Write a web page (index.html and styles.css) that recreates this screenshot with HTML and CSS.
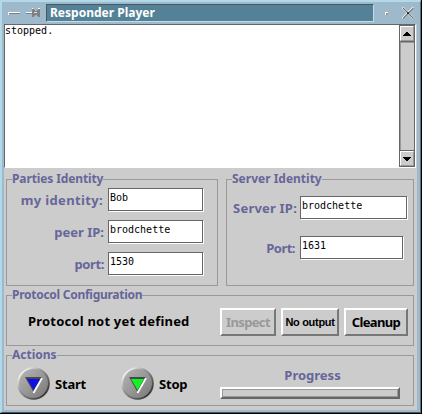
FILE: index.html
```html
<!DOCTYPE html>
<html lang="en">
<head>
<meta charset="utf-8">
<title>Responder Player</title>
<link rel="stylesheet" href="styles.css">
</head>
<body>
<div class="window">
  <header class="titlebar">
    <svg class="minimize" width="12" height="3" shape-rendering="crispEdges"><path d="M0 0h12v1H1v2H0z" fill="#fff"/><path d="M1 1h11v1H1z" fill="#808080"/></svg>
    <svg class="pin" width="15" height="10" shape-rendering="crispEdges"><path d="M0 4h6v1H0zM6 0h1v3H6zM12 0h2v1h-2z" fill="#fff"/><path d="M0 5h6V1h2v1h1v1h2V2h1V1h2v8h-2V8h-1V7H9v1H8v1H6V6H0z" fill="#808080"/><path d="M8 4h3v1H8z" fill="#e0e0e0"/></svg>
    <h1 class="title"><span>Responder Player</span></h1>
    <svg class="dot" width="3" height="3" shape-rendering="crispEdges"><path d="M0 0h3v1H1v2H0z" fill="#fff"/><path d="M1 1h2v2H1z" fill="#a09088"/></svg>
    <svg class="close" width="12" height="12"><path d="M.5.5l11 11M11.5.5l-11 11" stroke="#fff" stroke-width="2.2"/><path d="M1 1l10.5 10.5M11.5 1L1 11.5" stroke="#707070" stroke-width="1.2"/><path d="M5 5h2v2H5z" fill="#303030"/></svg>
  </header>
  <main class="content">
    <div class="log">
      <div class="log-text">stopped.</div>
      <div class="scrollbar">
        <div class="arrow"><svg width="8" height="4" shape-rendering="crispEdges"><path d="M3 0h2v1h1v1h1v1h1v1H0V3h1V2h1V1h1z"/></svg></div>
        <div class="track"></div>
        <div class="arrow"><svg width="8" height="4" shape-rendering="crispEdges"><path d="M0 0h8v1H7v1H6v1H5v1H3V3H2V2H1V1H0z"/></svg></div>
      </div>
    </div>
    <div class="identities">
      <section class="group parties">
        <h2 class="legend"><span class="l-parties">Parties Identity</span></h2>
        <div class="row"><label class="my">my identity:</label><div class="field">Bob</div></div>
        <div class="row"><label class="peer">peer IP:</label><div class="field">brodchette</div></div>
        <div class="row"><label class="port">port:</label><div class="field">1530</div></div>
      </section>
      <section class="group server">
        <h2 class="legend"><span class="l-server">Server Identity</span></h2>
        <div class="row"><label class="sip">Server IP:</label><div class="field wide">brodchette</div></div>
        <div class="row"><label class="sport">Port:</label><div class="field">1631</div></div>
      </section>
    </div>
    <section class="group protocol">
      <h2 class="legend"><span class="l-protocol">Protocol Configuration</span></h2>
      <div class="protocol-row">
        <p class="status">Protocol not yet defined</p>
        <div class="button inspect">Inspect</div>
        <div class="button output">No output</div>
        <div class="button cleanup">Cleanup</div>
      </div>
    </section>
    <section class="group actions">
      <h2 class="legend"><span class="l-actions">Actions</span></h2>
      <div class="action-row">
        <div class="action">
          <svg width="33" height="33" viewBox="0 0 33 33">
            <defs>
              <linearGradient id="rim" x1="0" y1="0" x2="1" y2="1"><stop offset=".12" stop-color="#fff"/><stop offset=".4" stop-color="#999"/><stop offset=".85" stop-color="#383838"/></linearGradient>
              <linearGradient id="face" x1="0" y1="0" x2="1" y2="1"><stop offset="0" stop-color="#b5b5b5"/><stop offset=".5" stop-color="#989898"/><stop offset="1" stop-color="#777"/></linearGradient>
            </defs>
            <circle cx="16.5" cy="16.5" r="16.3" fill="url(#rim)"/><circle cx="16.5" cy="16.5" r="14.4" fill="url(#face)"/>
            <path d="M8 10h17l-8.5 15z" fill="#484848"/><path d="M25 11l-8.5 15" stroke="#fff" stroke-width="1.8"/><path d="M10 12h13l-6.5 11z" fill="#1010e8"/>
          </svg>
          <span class="start">Start</span>
        </div>
        <div class="action">
          <svg width="33" height="33" viewBox="0 0 33 33">
            <circle cx="16.5" cy="16.5" r="16.3" fill="url(#rim)"/><circle cx="16.5" cy="16.5" r="14.4" fill="url(#face)"/>
            <path d="M8 10h17l-8.5 15z" fill="#484848"/><path d="M25 11l-8.5 15" stroke="#fff" stroke-width="1.8"/><path d="M10 12h13l-6.5 11z" fill="#10f520"/>
          </svg>
          <span class="stop">Stop</span>
        </div>
        <div class="progress"><span class="progress-label">Progress</span><div class="bar"></div></div>
      </div>
    </section>
  </main>
</div>
</body>
</html>
```
FILE: styles.css
```css
* { box-sizing: border-box; }
body { margin: 0; font: bold 12px/16px "Noto Sans", sans-serif; color: #000; background: #000; overflow: hidden; }
h1, h2, p { margin: 0; font: inherit; }
svg { display: block; flex: none; }
.window { width: 421px; height: 413px; padding-bottom: 2px; background: #9fb9cc; border: solid; border-width: 2px 1px 1px 2px; border-color: #b2d9e8 #5a7282 #405766 #b2d9e8; }
.titlebar { height: 22px; display: flex; align-items: flex-start; padding: 2px 6px 0; }
.minimize { margin-top: 8px; }
.pin { margin: 4px 5px 0 6px; }
.title { width: 328px; height: 18px; border: 1px solid; border-color: #465866 #b8e0ef #b8e0ef #465866; background: #548196; color: #fff; padding-left: 3px; line-height: 16px; }
.dot { margin: 8px 0 0 11px; }
.close { margin: 3px 0 0 14px; }
.content { margin-left: 2px; width: 413px; height: 386px; background: #ccc; }
.log { width: 412px; height: 144px; display: flex; background: #fff; border: 1px solid; border-color: #666 #fff #fff #666; }
.log-text, .field { font: 10px/12px "DejaVu Sans Mono", monospace; }
.log-text { flex: 1; }
.scrollbar { width: 16px; height: 142px; display: flex; flex-direction: column; border: 1px solid #666; background: #ccc; }
.arrow { height: 15px; display: flex; align-items: center; justify-content: center; border: 1px solid; border-color: #fff #999 #999 #fff; }
.track { flex: 1; border: solid #666; border-width: 1px 0; box-shadow: inset 1px 1px #999; }
.identities { display: flex; gap: 8px; padding: 11px 0 0 2px; }
.group { border: 1px solid #999; color: #669; }
.legend { height: 16px; margin: -9px 0 0 5px; }
.legend span { display: inline-block; background: #ccc; }
.l-parties { letter-spacing: -.12px; }
.l-protocol { letter-spacing: -.27px; }
.parties { width: 212px; height: 107px; }
.server { width: 188px; height: 107px; }
.row { display: flex; align-items: center; margin-bottom: 8px; }
.row label { text-align: right; font-size: 13px; white-space: nowrap; }
.parties .row:nth-child(2) { margin-top: 1px; }
.parties label { width: 97px; margin-right: 4px; }
.parties .my { width: 96px; margin-right: 5px; letter-spacing: .35px; }
.parties .port { letter-spacing: -.4px; }
.field { width: 95px; height: 23px; margin-bottom: 1px; color: #000; background: #fff; border: 1px solid #666; box-shadow: 1px 1px #fff; padding: 3px 0 0 1px; }
.server .row { margin-bottom: 16px; }
.server .row:nth-child(2) { margin-top: 9px; }
.server label { width: 70px; margin-right: 3px; }
.server .sip { letter-spacing: .2px; }
.server .sport { width: 68px; margin-right: 5px; letter-spacing: -.5px; }
.server .field { width: 103px; }
.server .wide { width: 107px; }
.protocol, .actions { width: 408px; height: 51px; margin: 9px 0 0 2px; }
.protocol-row { display: flex; margin-top: 5px; }
.status { width: 213px; padding: 5px 0 0 21px; font-size: 13px; letter-spacing: .2px; color: #000; white-space: nowrap; }
.button { height: 28px; border: 2px solid; border-color: #fff #777 #777 #fff; color: #000; display: flex; align-items: center; justify-content: center; white-space: nowrap; font-size: 13px; letter-spacing: -.65px; }
.inspect { width: 56px; margin-right: 5px; color: #999; }
.output { width: 58px; margin-right: 5px; font: bold 11px/16px "Liberation Sans", sans-serif; letter-spacing: -.3px; }
.cleanup { width: 64px; }
.action-row { display: flex; padding-left: 10px; margin-top: 4px; }
.action { width: 104px; display: flex; align-items: center; gap: 5px; color: #000; height: 33px; font-size: 13px; letter-spacing: -.2px; }
.progress { width: 180px; margin-left: -5px; text-align: center; font-size: 13px; }
.progress-label { display: block; padding-left: 5px; height: 20px; }
.bar { height: 12px; border: 2px solid; border-color: #fff #666 #666 #fff; box-shadow: inset 1px 1px #999, inset -1px -1px #999; }
```
